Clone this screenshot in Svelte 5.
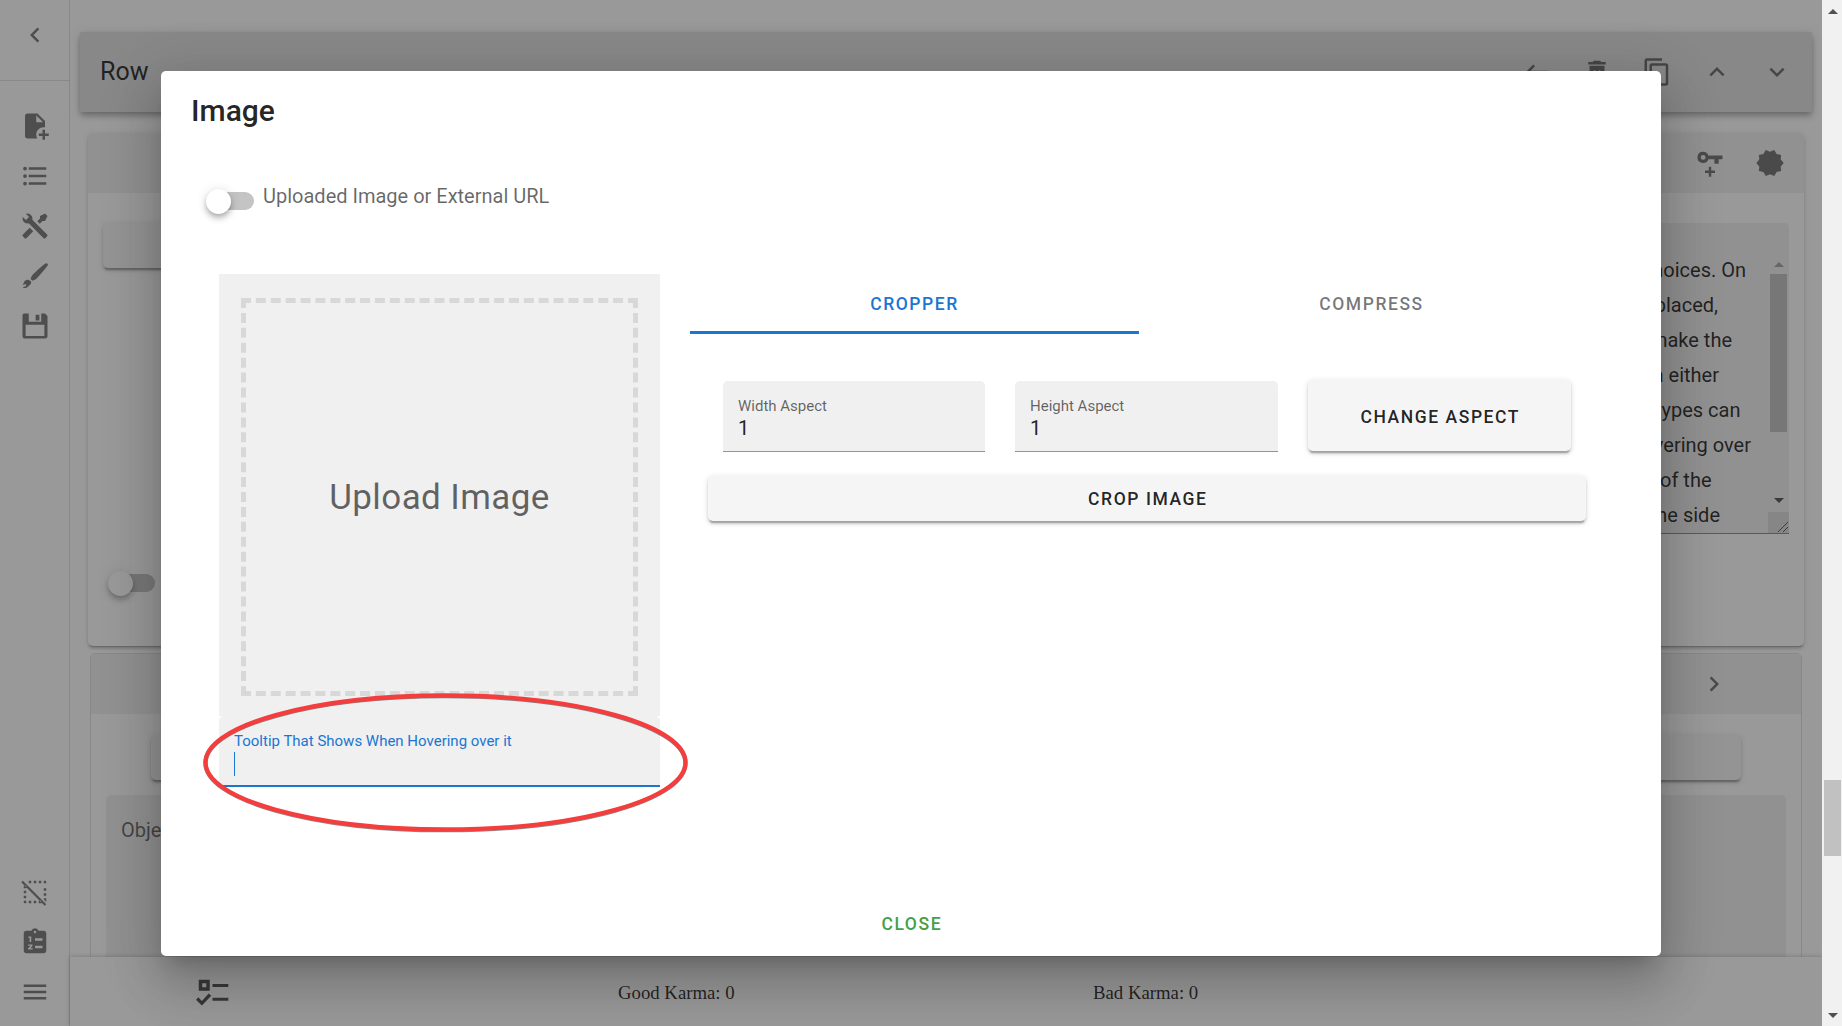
<script>
  const icons = {
    chevronLeft: 'M15.41,16.58L10.83,12L15.41,7.41L14,6L8,12L14,18L15.41,16.58Z',
    chevronRight: 'M8.59,16.58L13.17,12L8.59,7.41L10,6L16,12L10,18L8.59,16.58Z',
    chevronUp: 'M7.41,15.41L12,10.83L16.59,15.41L18,14L12,8L6,14L7.41,15.41Z',
    chevronDown: 'M7.41,8.58L12,13.17L16.59,8.58L18,10L12,16L6,10L7.41,8.58Z',
    filePlus: 'M14 2H6C4.89 2 4 2.89 4 4V20C4 21.11 4.89 22 6 22H13.81C13.28 21.09 13 20.05 13 19C13 15.69 15.69 13 19 13C19.34 13 19.67 13.03 20 13.08V8L14 2M13 9V3.5L18.5 9H13M23 20H20V23H18V20H15V18H18V15H20V18H23V20Z',
    list: 'M7,5H21V7H7V5M7,13V11H21V13H7M4,4.5A1.5,1.5 0 0,1 5.5,6A1.5,1.5 0 0,1 4,7.5A1.5,1.5 0 0,1 2.5,6A1.5,1.5 0 0,1 4,4.5M4,10.5A1.5,1.5 0 0,1 5.5,12A1.5,1.5 0 0,1 4,13.5A1.5,1.5 0 0,1 2.5,12A1.5,1.5 0 0,1 4,10.5M7,19V17H21V19H7M4,16.5A1.5,1.5 0 0,1 5.5,18A1.5,1.5 0 0,1 4,19.5A1.5,1.5 0 0,1 2.5,18A1.5,1.5 0 0,1 4,16.5Z',
    tools: 'M21.71 20.29L20.29 21.71A1 1 0 0 1 18.88 21.71L7 9.85A3.81 3.81 0 0 1 6 10A4 4 0 0 1 2.22 4.7L4.76 7.24L5.29 6.71L6.71 5.29L7.24 4.76L4.7 2.22A4 4 0 0 1 10 6A3.81 3.81 0 0 1 9.85 7L21.71 18.88A1 1 0 0 1 21.71 20.29M2.29 18.88A1 1 0 0 0 2.29 20.29L3.71 21.71A1 1 0 0 0 5.12 21.71L10.59 16.25L7.76 13.42M20 2L16 4V6L13.83 8.17L15.83 10.17L18 8H20L22 4Z',
    brush: 'M22.2 2.2L20.6 1.8C17.3 4.1 12.4 8.6 9.6 11.6L8.4 14.4L10.1 15.8L12.7 14.6C16.2 10.9 20 6.8 22.3 3.4ZM7.2 15.2C5.4 14.6 3.7 15.5 3.1 17.1L2.2 19.2L4.6 18.3L5 20L2.2 20.9C3.2 22 5 21.9 6.1 20.8L8.9 18L8.8 16.4Z',
    save: 'M3 2H7V8.5H17V2H20L22 4V20A2 2 0 0 1 20 22H4A2 2 0 0 1 2 20V3ZM4.5 11V20H19.5V11ZM12.5 3H15.5V7.5H12.5Z',
    selectOff: 'M1,4.27L2.28,3L21,21.72L19.73,23L1,4.27M20,3A1,1 0 0,1 21,4V5H19V3H20M15,5V3H17V5H15M11,5V3H13V5H11M7,5V3H9V5H7M21,20L19,18V17H21V20M15,21V19H17V21H15M11,21V19H13V21H11M7,21V19H9V21H7M4,21A1,1 0 0,1 3,20V19H5V21H4M3,15H5V17H3V15M21,15H19V13H21V15M3,11H5V13H3V11M21,11H19V9H21V11M3,7H5V9H3V7Z',
    clipboard: 'M19 3H14.82C14.4 1.84 13.3 1 12 1S9.6 1.84 9.18 3H5C3.9 3 3 3.9 3 5V19C3 20.1 3.9 21 5 21H19C20.1 21 21 20.1 21 19V5C21 3.9 20.1 3 19 3M12 3C12.55 3 13 3.45 13 4S12.55 5 12 5 11 4.55 11 4 11.45 3 12 3M6.8 7.5H9V12H7.7V8.7H6.8V7.5M10 14V15.2L8.3 16.9H10.2V18H6.5V17L8.6 15H6.5V14H10M18 17H12V15H18V17M18 11H12V9H18V11Z',
    menu: 'M3,6H21V8H3V6M3,11H21V13H3V11M3,16H21V18H3V16Z',
    back: 'M21,11H6.83L10.41,7.41L9,6L3,12L9,18L10.41,16.58L6.83,13H21V11Z',
    trash: 'M6,19A2,2 0 0,0 8,21H16A2,2 0 0,0 18,19V7H6V19M8.46,11.88L9.87,10.47L12,12.59L14.12,10.47L15.53,11.88L13.41,14L15.53,16.12L14.12,17.53L12,15.41L9.88,17.53L8.47,16.12L10.59,14L8.46,11.88M15.5,4L14.5,3H9.5L8.5,4H5V6H19V4H15.5Z',
    copy: 'M19,21H8V7H19M19,5H8A2,2 0 0,0 6,7V21A2,2 0 0,0 8,23H19A2,2 0 0,0 21,21V7A2,2 0 0,0 19,5M16,1H4A2,2 0 0,0 2,3V17H4V3H16V1Z',
    keyPlus: 'M6.5 3A4.5 4.5 0 1 0 10.7 9H15.5V12.5H19V9H22V6H10.7A4.5 4.5 0 0 0 6.5 3M6.5 5.6A1.9 1.9 0 1 1 6.5 9.4A1.9 1.9 0 0 1 6.5 5.6M11 15H13V18H16V20H13V23H11V20H8V18H11Z',
    decagram: 'M23,12L20.56,14.78L20.9,18.46L17.29,19.28L15.4,22.46L12,21L8.6,22.47L6.71,19.29L3.1,18.47L3.44,14.78L1,12L3.44,9.21L3.1,5.53L6.71,4.72L8.6,1.54L12,3L15.4,1.54L17.29,4.72L20.9,5.54L20.56,9.22L23,12Z',
    checklist: 'M2 2H10V10H2ZM4.5 4.5V7.5H7.5V4.5ZM12 5H23.5V7.2H12ZM12 15H23.5V17.2H12ZM0 16.5L1.7 14.8L4.3 17.5L9.2 12L11.1 13.7L4.3 20.8Z'
  };
  const lines = [
    { text: 'choices. On', end: 24 },
    { text: 'placed,', end: 52 },
    { text: 'make the', end: 38 },
    { text: 'in either', end: 51 },
    { text: 'types can', end: 29.5 },
    { text: 'hovering over', end: 19 },
    { text: 'of the', end: 58.5 },
    { text: 'the side', end: 50 }
  ];
</script>

{#snippet icon(name)}
  <svg class="icon" viewBox="0 0 24 24"><path d={icons[name]} fill-rule="evenodd" /></svg>
{/snippet}

<div class="window">
  <div class="viewport">
    <nav class="rail">
      <div class="rail-head">{@render icon('chevronLeft')}</div>
      <div class="rail-list">
        {#each ['filePlus', 'list', 'tools', 'brush', 'save'] as name}
          <div class="rail-item">{@render icon(name)}</div>
        {/each}
      </div>
      <div class="rail-list bottom">
        {#each ['selectOff', 'clipboard', 'menu'] as name}
          <div class="rail-item">{@render icon(name)}</div>
        {/each}
      </div>
    </nav>
    <div class="page">
      <main class="content">
        <header class="rowbar">
          <span class="row-title">Row</span>
          {#each ['back', 'trash', 'copy', 'chevronUp', 'chevronDown'] as name}
            <span class="row-action">{@render icon(name)}</span>
          {/each}
        </header>
        <section class="card">
          <div class="card-head">{@render icon('keyPlus')}{@render icon('decagram')}</div>
          <div class="card-body">
            <div class="card-left">
              <div class="btn"></div>
              <div class="switch"><span class="track"></span><span class="thumb"></span></div>
            </div>
            <div class="story">
              <div class="story-text">
                {#each lines as line}
                  <div class="line" style:padding-right="{line.end}px">{line.text}</div>
                {/each}
              </div>
              <div class="story-scroll">
                <svg class="arrow faint" viewBox="0 0 10 5"><path d="M0 5L5 0L10 5Z" /></svg>
                <div class="story-thumb"></div>
                <svg class="arrow" viewBox="0 0 10 5"><path d="M0 0H10L5 5Z" /></svg>
              </div>
              <svg class="grip" viewBox="0 0 21 21"><path d="M10 20L20 10M15 20L20 15" /></svg>
            </div>
          </div>
        </section>
        <section class="object">
          <div class="object-head">{@render icon('chevronRight')}</div>
          <div class="btn object-btn"></div>
          <div class="object-text">Object Text</div>
        </section>
      </main>
      <footer class="footer">
        {@render icon('checklist')}
        <span class="good">Good Karma: 0</span>
        <span class="bad">Bad Karma: 0</span>
      </footer>
    </div>

    <div class="scrim">
      <div class="dialog">
        <h1>Image</h1>
        <div class="url-switch">
          <div class="switch"><span class="track"></span><span class="thumb"></span></div>
          <span>Uploaded Image or External URL</span>
        </div>
        <div class="columns">
          <div class="upload-col">
            <div class="upload"><div class="drop">Upload Image</div></div>
            <div class="field focused">
              <label for="tooltip">Tooltip That Shows When Hovering over it</label>
              <div class="caret" id="tooltip"></div>
            </div>
            <svg class="ring" viewBox="0 0 490 144">
              <ellipse class="ring-shade" cx="245.5" cy="73.2" rx="240" ry="67" />
              <ellipse cx="245.5" cy="72.5" rx="240" ry="67" />
            </svg>
          </div>
          <div class="crop-col">
            <div class="tabs">
              <div class="tab active">Cropper</div>
              <div class="tab">Compress</div>
            </div>
            <div class="aspects">
              <div class="field"><span class="label">Width Aspect</span><span class="value">1</span></div>
              <div class="field"><span class="label">Height Aspect</span><span class="value">1</span></div>
              <button class="btn tall">Change Aspect</button>
            </div>
            <button class="btn crop">Crop Image</button>
          </div>
        </div>
        <div class="actions">Close</div>
      </div>
    </div>
  </div>
  <div class="scrollbar">
    <svg class="arrow" viewBox="0 0 10 5"><path d="M0 5L5 0L10 5Z" /></svg>
    <div class="scroll-thumb"></div>
    <svg class="arrow last" viewBox="0 0 10 5"><path d="M0 0H10L5 5Z" /></svg>
  </div>
</div>

<style>
  :global(body) { margin: 0; overflow: hidden; }
  * { box-sizing: border-box; }
  .window { display: flex; width: 1842px; height: 1026px; overflow: hidden; font: 20px/1.5 Roboto, sans-serif; color: rgba(0, 0, 0, .87); background: #fff; }
  .viewport { position: relative; display: flex; width: 1822px; height: 1026px; overflow: hidden; }
  .icon { display: block; width: 30px; height: 30px; flex: none; fill: rgba(0, 0, 0, .54); }

  .rail { width: 70px; display: flex; flex-direction: column; border-right: 1px solid rgba(0, 0, 0, .12); }
  .rail-head { height: 81px; padding: 20px 0 0 20px; border-bottom: 1px solid rgba(0, 0, 0, .12); }
  .rail-list { padding-top: 20px; }
  .rail-item { height: 50px; padding: 10px 0 0 20px; }
  .rail-list.bottom { margin-top: auto; padding-bottom: 9px; }

  .page { width: 1752px; display: flex; flex-direction: column; }
  .content { height: 957px; overflow: hidden; padding: 32px 10px 0; }
  .rowbar { height: 80px; display: flex; align-items: center; padding: 0 20px; background: #e0e0e0; border-radius: 2px; box-shadow: 0 2.5px 5px -1px rgba(0, 0, 0, .2), 0 5px 6px rgba(0, 0, 0, .14), 0 1px 12px rgba(0, 0, 0, .12); }
  .row-title { flex: 1; font-size: 25px; }
  .row-action { width: 60px; display: flex; justify-content: center; }
  .rowbar .row-action:last-child { width: 30px; margin-left: 15px; }
  .card { margin: 21px 8px 0; height: 513px; border-radius: 5px; background: #fff; box-shadow: 0 3.5px 1px -2.5px rgba(0, 0, 0, .2), 0 2.5px 2.5px rgba(0, 0, 0, .14), 0 1px 6px rgba(0, 0, 0, .12); }
  .card-head { height: 60px; display: flex; justify-content: flex-end; align-items: center; gap: 30px; padding: 0 19px 1px 0; background: #f0f0f0; border-radius: 5px 5px 0 0; }
  .card-body { display: flex; justify-content: space-between; padding: 30px 15px 0; }
  .card-left { width: 500px; display: flex; flex-direction: column; }
  .card-left .switch { margin: 301px 0 0 5px; }
  .btn { display: flex; align-items: center; justify-content: center; height: 45px; padding: 2px 0 0 1.5px; border: 0; border-radius: 5px; background: #f5f5f5; color: rgba(0, 0, 0, .87); font: 500 17.5px Roboto, sans-serif; letter-spacing: .0893em; text-transform: uppercase; box-shadow: 0 3.75px 1.25px -2.5px rgba(0, 0, 0, .2), 0 2.5px 2.5px rgba(0, 0, 0, .14), 0 1.25px 6.25px rgba(0, 0, 0, .12); }

  .switch { position: relative; width: 49px; height: 28px; flex: none; }
  .track { position: absolute; left: 3px; top: 5px; width: 45px; height: 18px; border-radius: 9px; background: #c4c4c4; }
  .thumb { position: absolute; left: 0; top: 2px; width: 25px; height: 25px; border-radius: 50%; background: #fff; box-shadow: 0 2.5px 5px -1px rgba(0, 0, 0, .2), 0 5px 6px rgba(0, 0, 0, .14), 0 1px 12px rgba(0, 0, 0, .12); }
  .card-left .track { left: 2px; }

  .story { position: relative; display: flex; width: 1100px; height: 311px; background: #f0f0f0; border-bottom: 1px solid rgba(0, 0, 0, .42); border-radius: 5px 5px 0 0; overflow: hidden; }
  .story-text { flex: 1; padding-top: 30px; text-align: right; }
  .line { height: 35px; line-height: 35px; white-space: nowrap; }
  .story-scroll { width: 17px; margin-right: 2px; padding-top: 39px; display: flex; flex-direction: column; align-items: center; }
  .arrow { width: 10px; height: 5px; flex: none; fill: #505050; }
  .arrow.faint { fill: #a3a3a3; }
  .story-thumb { width: 17px; height: 158px; margin: 7px 0 66px; background: #c1c1c1; flex: none; }
  .grip { position: absolute; right: 0; bottom: 0; width: 21px; height: 21px; background: #dcdcdc; stroke: #555; stroke-width: 1; }

  .object { margin: 7px 10px 0; height: 400px; border: 1px solid rgba(0, 0, 0, .12); border-radius: 5px; }
  .object-head { height: 60px; display: flex; justify-content: flex-end; align-items: center; padding-right: 72px; background: #f0f0f0; }
  .object-btn { margin: 21px 60px 0; }
  .object-text { height: 250px; margin: 15px 15px 0; padding: 20px 15px; background: #f0f0f0; border-radius: 5px; color: rgba(0, 0, 0, .6); }

  .footer { height: 69px; display: flex; align-items: center; padding-left: 126px; background: #fff; box-shadow: 0 0 5px rgba(0, 0, 0, .25); z-index: 1; font: 18.75px "Liberation Serif", serif; }
  .footer .icon { fill: rgba(0, 0, 0, .7); width: 33px; height: 33px; margin-top: 4px; }
  .footer span { padding-top: 2px; }
  .good { width: 475px; margin-left: 389px; }

  .scrim { position: absolute; inset: 0; z-index: 5; display: flex; align-items: center; justify-content: center; background: rgba(33, 33, 33, .46); }
  .dialog { width: 1500px; height: 885px; display: flex; flex-direction: column; background: #fff; border-radius: 5px; box-shadow: 0 13.75px 18.75px -8.75px rgba(0, 0, 0, .2), 0 30px 47.5px 3.75px rgba(0, 0, 0, .14), 0 11.25px 57.5px 10px rgba(0, 0, 0, .12); }
  h1 { margin: 20px 0 0 30px; height: 40px; font-size: 30px; line-height: 40px; font-weight: 500; letter-spacing: 0; }
  .url-switch { display: flex; height: 50px; margin: 56px 0 0 45px; color: rgba(0, 0, 0, .6); }
  .url-switch > span { margin: -6px 0 0 8px; }
  .columns { display: flex; margin: 37px 0 0 58px; gap: 30px; }
  .upload-col { position: relative; width: 441px; }
  .upload { height: 442px; padding: 24px 22px 20px; background: #f0f0f0; }
  .drop { height: 398px; padding-top: 4px; border: 5px dashed #d8d8d8; display: flex; align-items: center; justify-content: center; font-size: 35px; letter-spacing: .4px; color: rgba(0, 0, 0, .6); }
  .field { height: 71px; display: flex; flex-direction: column; padding: 15px 15px 0; background: #f0f0f0; border-radius: 5px 5px 0 0; border-bottom: 1px solid #949494; }
  .field label, .label { font-size: 15px; line-height: 20px; color: rgba(0, 0, 0, .6); }
  .value { line-height: 25px; }
  .field.focused { border-bottom: 2px solid #1976d2; }
  .field.focused label { color: #1976d2; }
  .caret { width: 1px; height: 24px; margin-top: 1px; background: #1976d2; }
  .ring { position: absolute; left: -19px; top: 416px; width: 490px; height: 144px; fill: none; stroke: #f43e3e; stroke-width: 4.3; }
  .ring-shade { stroke: rgba(0, 0, 0, .45); }

  .crop-col { width: 914px; }
  .tabs { display: grid; grid-template-columns: 449px 465px; height: 60px; }
  .tab { display: flex; align-items: center; justify-content: center; padding-top: 2px; font-size: 17.5px; font-weight: 500; letter-spacing: .0893em; text-transform: uppercase; color: rgba(0, 0, 0, .54); }
  .tab.active { color: #1976d2; box-shadow: inset 0 -3px #1976d2; }
  .aspects { display: grid; grid-template-columns: 262px 263px 263px; gap: 30px; padding: 47px 33px 0; }
  .tall { height: 71px; margin-top: -1px; padding-top: 3px; }
  .crop { width: 878px; margin: 24px 0 0 18px; }
  .actions { margin: auto auto 17px; padding-left: 1.5px; font-size: 17.5px; font-weight: 500; letter-spacing: .0893em; text-transform: uppercase; line-height: 30px; color: #43a047; }

  .scrollbar { width: 20px; display: flex; flex-direction: column; align-items: center; padding: 9px 0 8px 1px; background: #f1f1f1; }
  .scroll-thumb { width: 17px; height: 76px; margin-top: 766px; background: #c1c1c1; }
  .arrow.last { margin-top: auto; }
</style>
